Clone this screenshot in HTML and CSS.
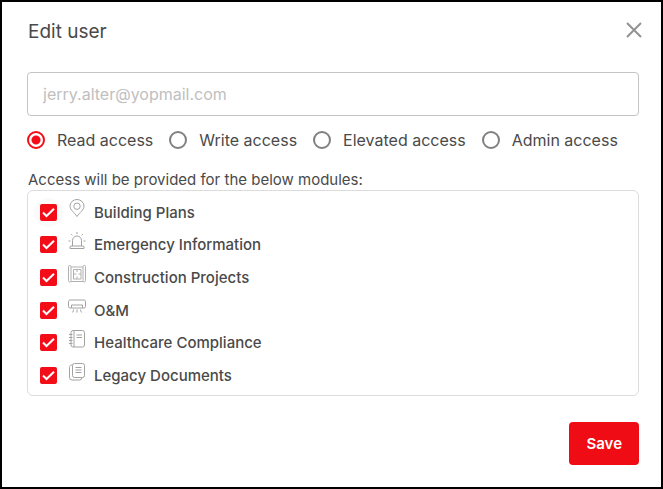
FILE: index.html
```html
<!DOCTYPE html>
<html lang="en">

<head>
    <meta charset="UTF-8">
    <meta name="viewport" content="width=device-width, initial-scale=1.0">
    <title>Edit user</title>
    <link rel="stylesheet" href="styles.css">
</head>

<body>
    <form class="edit-dialog">
        <div class="dialog-header">
            <h1>Edit user</h1>
            <button type="button" class="close-button" aria-label="Close">
                <svg viewBox="0 0 16 16" width="16" height="16">
                    <path d="M1 1l14 14M15 1L1 15" />
                </svg>
            </button>
        </div>

        <input type="email" class="email-input" placeholder="jerry.alter@yopmail.com" aria-label="Email">

        <!-- Access level -->
        <div class="access-options">
            <label class="access-option"><input type="radio" name="access" value="read" checked>Read access</label>
            <label class="access-option"><input type="radio" name="access" value="write">Write access</label>
            <label class="access-option"><input type="radio" name="access" value="elevated">Elevated access</label>
            <label class="access-option"><input type="radio" name="access" value="admin">Admin access</label>
        </div>

        <!-- Modules -->
        <p class="modules-title">Access will be provided for the below modules:</p>
        <div class="modules-list">
            <label class="module">
                <input type="checkbox" name="building-plans" class="focused" checked>
                <svg class="module-icon" viewBox="0 0 18 18">
                    <path d="M9 17.500C6.500 13.500 2 11 2 7.200a7 6.700 0 0 1 14 0C16 11 11.500 13.500 9 17.500z" />
                    <circle cx="9" cy="7.200" r="3.200" />
                </svg>
                <span>Building Plans</span>
            </label>
            <label class="module">
                <input type="checkbox" name="emergency-information" checked>
                <svg class="module-icon" viewBox="0 0 18 18">
                    <path d="M4.500 14V8.500a4.500 4.500 0 0 1 9 0V14M3 14h12a1 1 0 0 1 1 1v1.500H2V15a1 1 0 0 1 1-1z" />
                    <path d="M9 0v2M3.200 2.200l1.200 1.200M14.800 2.200l-1.200 1.200M.5 9h2M15.500 9h2" />
                </svg>
                <span>Emergency Information</span>
            </label>
            <label class="module">
                <input type="checkbox" name="construction-projects" checked>
                <svg class="module-icon fine" viewBox="0 0 18 18">
                    <path d="M.5 1.500a1.200 1 0 0 1 2.500 0v14a1.200 1.500 0 0 1-2.500 0zM15 1.500a1.200 1 0 0 1 2.500 0v14a1.200 1.500 0 0 1-2.500 0zM3 2h12M3 16.500h12" />
                    <path d="M5.500 4.500h7.500v9.500H5.500zM5.500 9h3M9 4.500V7M9 11.500V14M10.500 9H13" />
                </svg>
                <span>Construction Projects</span>
            </label>
            <label class="module">
                <input type="checkbox" name="om" checked>
                <svg class="module-icon" viewBox="0 0 18 18">
                    <path d="M3.500 11H2A1.500 1.500 0 0 1 .5 9.500V4.500A1.500 1.500 0 0 1 2 3h14a1.500 1.500 0 0 1 1.500 1.500v5A1.500 1.500 0 0 1 16 11h-1.500" />
                    <path d="M3.500 11V8h11v3zM5.500 12.500c0 1.500-.5 2.500-1.500 3M9 12.500v3M12.500 12.500c0 1.500.5 2.500 1.500 3" />
                </svg>
                <span>O&amp;M</span>
            </label>
            <label class="module">
                <input type="checkbox" name="healthcare-compliance" checked>
                <svg class="module-icon" viewBox="0 0 18 18">
                    <rect x="3" y=".5" width="13.500" height="16.500" rx="2" />
                    <path d="M6 .5V17M1 4.500h3.500M1 7.500h3.500M1 10.500h3.500M1 13.500h3.500M8.500 5h5.500M8.500 7.500h5.500" />
                </svg>
                <span>Healthcare Compliance</span>
            </label>
            <label class="module">
                <input type="checkbox" name="legacy-documents" checked>
                <svg class="module-icon" viewBox="0 0 18 18">
                    <path d="M6.500.5h8a2 2 0 0 1 2 2v10a2 2 0 0 1-2 2h-8a2 2 0 0 1-2-2v-10a2 2 0 0 1 2-2z" />
                    <path d="M4.500 2A2.500 2.500 0 0 0 1.500 4.500V14.500a2.500 2.500 0 0 0 2.500 2.500h7.500a2.500 2.500 0 0 0 2.500-2.500M7.500 4.500h6M7.500 7h6M7.500 9.500h6" />
                </svg>
                <span>Legacy Documents</span>
            </label>
        </div>

        <div class="dialog-footer">
            <button type="submit" class="save-button">Save</button>
        </div>
    </form>
</body>

</html>
```
FILE: styles.css
```css
* {
    box-sizing: border-box;
}

body {
    margin: 0;
    font-family: Inter, "Liberation Sans", sans-serif;
    color: #4a4a4a;
    background: #fff;
}

.edit-dialog {
    min-height: 100vh;
    padding: 16px 22px 20px 25px;
    border: 2px solid #000;
}

/* Header */
.dialog-header {
    display: flex;
    justify-content: space-between;
    align-items: flex-start;
    padding-left: 1px;
    margin-bottom: 26px;
}

.dialog-header h1 {
    margin: 0;
    font-size: 19px;
    font-weight: 400;
    line-height: 28px;
}

.close-button {
    display: flex;
    padding: 4px 0;
    margin-right: -3px;
    border: none;
    background: none;
    cursor: pointer;
}

.close-button svg {
    fill: none;
    stroke: #929292;
    stroke-width: 2;
}

.email-input {
    display: block;
    width: 100%;
    height: 44px;
    padding: 0 15px;
    border: 1px solid #c4c4c4;
    border-radius: 4px;
    font-family: inherit;
    font-size: 16px;
    color: #4a4a4a;
}

.email-input::placeholder {
    color: #c0c0c0;
}

/* Radio buttons */
.access-options {
    display: flex;
    flex-wrap: wrap;
    gap: 16px;
    padding: 12px 0;
}

.access-option {
    display: flex;
    align-items: center;
    gap: 12px;
    font-size: 16px;
    line-height: 24px;
}

.access-option input {
    appearance: none;
    width: 18px;
    height: 18px;
    margin: 0;
    border: 2px solid #808080;
    border-radius: 50%;
}

.access-option input:checked {
    border-color: #f20d18;
    background: radial-gradient(circle, #f20d18 4px, #fff 5px);
}

/* Modules */
.modules-title {
    margin: 0;
    padding: 6px 0 0 1px;
    font-size: 15px;
    line-height: 20px;
}

.modules-list {
    display: grid;
    grid-auto-rows: 1fr;
    min-height: 206px;
    padding: 5px 12px 3px;
    border: 1px solid #dcdcdc;
    border-radius: 6px;
}

.module {
    display: flex;
    align-items: center;
    font-size: 15px;
    font-weight: 500;
}

.module input {
    appearance: none;
    position: relative;
    width: 17px;
    height: 17px;
    margin: 0 11px 0 0;
    border: 1px solid #808080;
    border-radius: 2px;
}

.module input:checked {
    border: none;
    background: #f20d18 url("data:image/svg+xml,%3Csvg xmlns='http://www.w3.org/2000/svg' viewBox='0 0 17 17'%3E%3Cpath d='M3 8.500l3.500 3.500L14 4.700' fill='none' stroke='white' stroke-width='2'/%3E%3C/svg%3E") center / 100% no-repeat;
}

/* Round halo behind the focused checkbox */
.module input.focused::before {
    content: "";
    position: absolute;
    inset: -6px;
    z-index: -1;
    border-radius: 50%;
    background: #fafafa;
}

.module-icon {
    width: 18px;
    height: 18px;
    margin: 0 8px 8px 0;
    fill: none;
    stroke: #a2a2a2;
    stroke-width: 1;
}

.module-icon.fine {
    stroke: #b0b0b0;
}

/* Footer */
.dialog-footer {
    display: flex;
    justify-content: flex-end;
    margin-top: 26px;
}

.save-button {
    height: 43px;
    padding: 0 17px;
    border: none;
    border-radius: 4px;
    background: #f00c14;
    color: #fff;
    font-family: inherit;
    font-size: 15px;
    font-weight: 600;
    cursor: pointer;
}
```
